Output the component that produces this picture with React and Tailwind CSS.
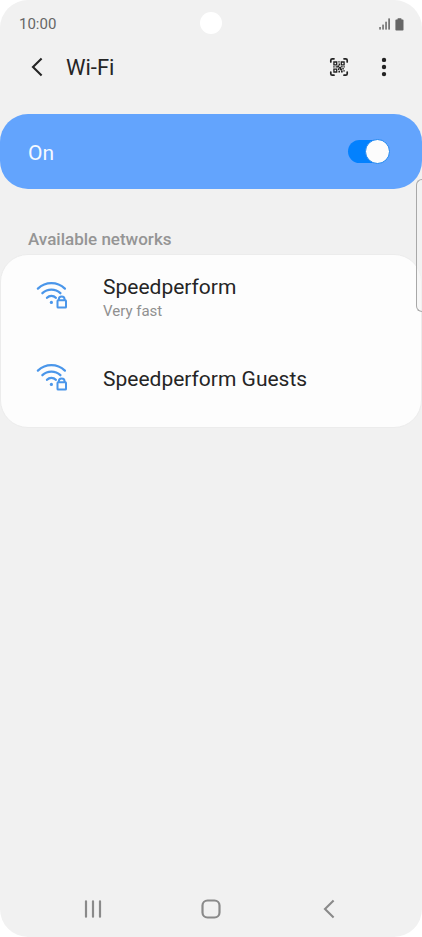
import { useState } from "react";

const networks = [
    { name: "Speedperform", speed: "Very fast" },
    { name: "Speedperform Guests" },
];

const SignalIcon = () => (
    <svg width="12" height="12" viewBox="0 0 12 12" fill="#666">
        <rect x="0.3" y="9" width="1.5" height="2.6" />
        <rect x="3.3" y="6.6" width="1.5" height="5" />
        <rect x="6.3" y="3.7" width="1.5" height="7.9" />
        <rect x="9.3" y="0.4" width="1.6" height="11.2" />
    </svg>
);

const BatteryIcon = () => (
    <svg width="9" height="13" viewBox="0 0 9 13" fill="#666">
        <path d="M2.5 1.5V.8q0-.6.6-.6h2.8q.6 0 .6.6v.7h1.2q.8 0 .8.8v9.4q0 .8-.8.8H1.2q-.8 0-.8-.8V2.3q0-.8.8-.8z" />
    </svg>
);

const QrIcon = () => (
    <svg width="20" height="20" viewBox="0 0 20 20" fill="none" stroke="#222">
        <path
            d="M1.8 5V3.3q0-1.5 1.5-1.5H5M15 1.8h1.7q1.5 0 1.5 1.5V5M18.2 15v1.7q0 1.5-1.5 1.5H15M5 18.2H3.3q-1.5 0-1.5-1.5V15"
            strokeWidth="1.7"
            strokeLinecap="round"
        />
        <path
            d="M4.9 5h2.8v2.8H4.9zM12.3 5h2.8v2.8h-2.8zM4.9 12.2h2.8V15H4.9z"
            strokeWidth="1.3"
        />
        <path
            d="M9.3 4.2h1.4v1.4H9.3zM9.6 6.6h1.4v1.8H9.6zM4.2 9.3h1.5v1.3H4.2zM6.6 9.3h1.8v1.3H6.6zM8.4 8.6H10v1.8H8.4zM10 9.8h2v1.7h-2zM12.2 9h1.4v1.5h-1.4zM14.4 9.3h1.4v1.3h-1.4zM9 11.3h1.4V13H9zM11 11.5h2v1.7h-2zM13.3 10.9h1.5v1.5h-1.5zM9.4 13.8H11v1.8H9.4zM12 13.4h1.7v2H12zM14.3 13.2h1.5v1.4h-1.5z"
            fill="#222"
            stroke="none"
        />
    </svg>
);

const MoreIcon = () => (
    <svg width="6" height="20" viewBox="0 0 6 20" fill="#222">
        <circle cx="3" cy="2.9" r="2.2" />
        <circle cx="3" cy="10" r="2.2" />
        <circle cx="3" cy="17.1" r="2.2" />
    </svg>
);

const ChevronIcon = () => (
    <svg
        width="12"
        height="20"
        viewBox="0 0 12 20"
        fill="none"
        stroke="currentColor"
        strokeWidth="2.1"
    >
        <path d="M10.6 1.6 2 10l8.6 8.4" />
    </svg>
);

const SecureWifiIcon = () => (
    <svg
        className="shrink-0"
        width="32"
        height="30"
        viewBox="0 0 32 30"
        fill="none"
        stroke="#4a96ea"
        strokeWidth="2.3"
        strokeLinecap="round"
    >
        <path d="M1.9 7.6Q7.8 2.2 15.4 2.2T28.9 7.6" />
        <path d="M6.4 12.2Q10.2 8.6 15.4 8.6T24.4 12.2" />
        <path d="M11 16.8Q12.8 14.8 15.4 14.8T19.8 16.8" />
        <circle cx="15.4" cy="21.4" r="1.6" fill="#4a96ea" stroke="none" />
        <path d="M22.8 19v-.6a2.9 2.9 0 0 1 5.8 0v.6" strokeWidth="2" />
        <rect x="21.5" y="19.3" width="8.5" height="7.2" rx="0.6" strokeWidth="2" />
    </svg>
);

const StatusBar = () => (
    <div className="relative flex h-12 items-center justify-between pr-[18px] pl-[19px] text-[15px] text-[#666]">
        <span>10:00</span>
        <div className="absolute top-3 left-1/2 size-[22px] -translate-x-1/2 rounded-full bg-white" />
        <div className="flex items-center gap-1">
            <SignalIcon />
            <BatteryIcon />
        </div>
    </div>
);

const NetworkRow = ({ network }) => (
    <li>
        <button className="flex h-[82px] w-full items-center gap-[35px] px-[35px] text-left">
            <SecureWifiIcon />
            <span className="pt-0.5">
                <span className="block text-[21px] leading-7 text-[#252525]">
                    {network.name}
                </span>
                {network.speed && (
                    <span className="block text-[15px] leading-5 text-[#909090]">
                        {network.speed}
                    </span>
                )}
            </span>
        </button>
    </li>
);

const App = () => {
    const [enabled, setEnabled] = useState(true);

    return (
        <div className="min-h-screen bg-white font-['Roboto',sans-serif]">
            <div className="relative flex min-h-screen flex-col overflow-hidden rounded-[28px] bg-[#f1f1f1]">
                <StatusBar />

                {/* Header */}
                <header className="flex h-[38px] items-center pr-[35px] pl-[31px] text-[#252525]">
                    <button aria-label="Back">
                        <ChevronIcon />
                    </button>
                    <h1 className="ml-[23px] flex-1 pt-0.5 text-[22px] leading-7">Wi-Fi</h1>
                    <button aria-label="Scan QR code">
                        <QrIcon />
                    </button>
                    <button aria-label="More options" className="ml-8">
                        <MoreIcon />
                    </button>
                </header>

                {/* Wi-Fi switch */}
                <label className="mt-7 flex h-[75px] items-center justify-between rounded-[28px] bg-[#63a4fd] pr-8 pl-7 text-[#f5f9ff]">
                    <span className="pt-0.5 text-[21px] leading-7">
                        {enabled ? "On" : "Off"}
                    </span>
                    <span className="relative flex h-[25px] w-[42px] items-center">
                        <input
                            type="checkbox"
                            role="switch"
                            checked={enabled}
                            onChange={(e) => setEnabled(e.target.checked)}
                            className="peer h-[23px] w-10 appearance-none rounded-full bg-[#8d9aab] checked:bg-[#0381fe]"
                        />
                        <span className="pointer-events-none absolute top-0 left-0 size-[25px] rounded-full border border-[#1f86f0] bg-[#fcfcfc] peer-checked:right-0 peer-checked:left-auto" />
                    </span>
                </label>

                {/* Networks */}
                <section className="mt-[39px]">
                    <h2 className="pl-7 text-[17px] leading-[22px] font-medium text-[#959595]">
                        Available networks
                    </h2>
                    <ul className="mt-1 rounded-[28px] border border-[#ececec] bg-[#fdfdfd] pb-2">
                        {networks.map((network) => (
                            <NetworkRow key={network.name} network={network} />
                        ))}
                    </ul>
                </section>

                {/* Edge panel handle */}
                <div className="absolute top-[179px] right-0 h-[133px] w-1.5 rounded-l-md border border-r-0 border-[#a8a8a8] bg-[#f4f4f4]/60" />

                {/* Navigation bar */}
                <nav className="mt-auto flex h-14 items-center justify-between px-[83px] text-[#8a8a8a]">
                    <button aria-label="Recent apps">
                        <svg
                            width="20"
                            height="20"
                            viewBox="0 0 20 20"
                            stroke="currentColor"
                            strokeWidth="2.2"
                            strokeLinecap="round"
                        >
                            <path d="M3 2.3v15.4M10 2.3v15.4M17 2.3v15.4" />
                        </svg>
                    </button>
                    <button aria-label="Home">
                        <svg
                            width="20"
                            height="20"
                            viewBox="0 0 20 20"
                            fill="none"
                            stroke="currentColor"
                            strokeWidth="2.2"
                        >
                            <rect x="1.5" y="1.5" width="17" height="17" rx="5" />
                        </svg>
                    </button>
                    <button aria-label="Back" className="flex w-5 justify-center">
                        <ChevronIcon />
                    </button>
                </nav>
            </div>
        </div>
    );
};

export default App;
